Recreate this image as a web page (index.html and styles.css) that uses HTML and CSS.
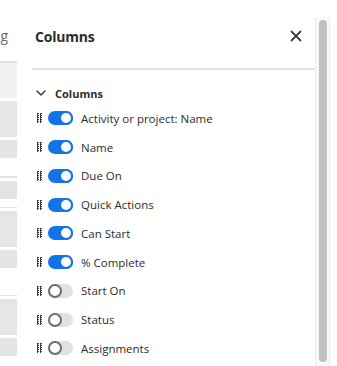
FILE: index.html
```html
<!DOCTYPE html>
<html lang="en">
<head>
	<meta charset="UTF-8">
	<meta name="viewport" content="width=device-width, initial-scale=1.0">
	<title>Columns</title>
	<link rel="stylesheet" href="styles.css">
</head>
<body>
	<div class="page">
		<div class="table-edge">
			<div class="edge-label">Sorting</div>
			<div class="edge-head"></div>
			<div class="edge-cell tall"></div>
			<div class="edge-cell short"></div>
			<div class="edge-line thick"></div>
			<div class="edge-cell short"></div>
			<div class="edge-line"></div>
			<div class="edge-cell tall"></div>
			<div class="edge-cell short"></div>
			<div class="edge-line spaced"></div>
			<div class="edge-cell tall"></div>
			<div class="edge-cell short"></div>
		</div>

		<div class="panel">
			<div class="panel-body">
				<div class="panel-header">
					<h2 class="panel-title">Columns</h2>
					<a href="#" class="btn-close" aria-label="Close">
						<svg width="12" height="12" viewBox="0 0 12 12"><path d="M1.5 1.5 L10.5 10.5 M10.5 1.5 L1.5 10.5" stroke="#3a3a3a" stroke-width="1.8" stroke-linecap="round"/></svg>
					</a>
				</div>
				<div class="divider"></div>

				<div class="section-head">
					<svg class="chevron" width="10" height="6" viewBox="0 0 10 6"><path d="M1 1 L5 5 L9 1" fill="none" stroke="#3a3a3a" stroke-width="1.5" stroke-linecap="round" stroke-linejoin="round"/></svg>
					<span>Columns</span>
				</div>

				<ul class="list-col" id="columns">
					<li class="item-col on"><i class="grip"></i><span class="switch"></span><span class="col-name">Activity or project: Name</span></li>
					<li class="item-col on"><i class="grip"></i><span class="switch"></span><span class="col-name">Name</span></li>
					<li class="item-col on"><i class="grip"></i><span class="switch"></span><span class="col-name">Due On</span></li>
					<li class="item-col on"><i class="grip"></i><span class="switch"></span><span class="col-name">Quick Actions</span></li>
					<li class="item-col on"><i class="grip"></i><span class="switch"></span><span class="col-name">Can Start</span></li>
					<li class="item-col on"><i class="grip"></i><span class="switch"></span><span class="col-name">% Complete</span></li>
					<li class="item-col"><i class="grip"></i><span class="switch"></span><span class="col-name">Start On</span></li>
					<li class="item-col"><i class="grip"></i><span class="switch"></span><span class="col-name">Status</span></li>
					<li class="item-col"><i class="grip"></i><span class="switch"></span><span class="col-name">Assignments</span></li>
				</ul>
			</div>
			<div class="scroll-track"><div class="scroll-thumb"></div></div>
		</div>
	</div>

	<script>
		// toggle a column on click
		document.querySelectorAll('#columns>li').forEach((item)=>{
			item.onclick=()=>{ item.classList.toggle('on'); }
		});
	</script>
</body>
</html>
```

FILE: styles.css
```css
html, body{margin: 0; padding: 0; background: #fff;}
body{font-family: "Open Sans", "Noto Sans", sans-serif; color: #2c2c2c;}
.page{display: flex; width: 337px; height: 366px; overflow: hidden;}

/* table behind the panel */
.table-edge{width: 17px; flex: none; overflow: hidden;}
.edge-label{
	margin-top: 27px; height: 18px; line-height: 18px; font-size: 14px; color: #6e6e6e;
	white-space: nowrap; display: flex; justify-content: flex-end; padding-right: 9px;
}
.edge-head{margin-top: 16px; height: 35px; background: #f1f1f1; border-top: 2px solid #e3e3e3;}
.edge-cell{background: #e6e6e7; margin-top: 3px;}
.edge-cell.tall{height: 36px;}
.edge-cell.short{height: 18px; background: #e4e4e4;}
.edge-line{height: 1px; background: #e4e4e4; margin-top: 8px;}
.edge-line.thick{height: 2px; margin-top: 18px; background: #e2e2e2;}
.edge-line.spaced{margin-top: 27px;}

/* panel */
.panel{flex: 1; display: flex; background: #fff;}
.panel-body{width: 298px; flex: none; padding-left: 15px; box-sizing: border-box;}
.panel-header{
	display: flex; align-items: center; justify-content: space-between;
	height: 32px; margin-top: 20px; margin-bottom: 16px; padding: 0 13px 0 3px;
}
.panel-title{margin: 0; font-size: 14px; font-weight: 700; letter-spacing: -0.2px;}
.btn-close{display: flex; width: 12px; height: 12px;}
.divider{height: 2px; background: #e1e1e1;}

.section-head{
	display: flex; align-items: center; height: 20px; margin-top: 13px;
	padding-left: 4px; font-size: 11px; font-weight: 700;
}
.chevron{margin-right: 9px;}

.list-col{list-style: none; margin: 1px 0 0; padding: 0 0 0 5px;}
.item-col{display: flex; align-items: center; height: 28.75px; font-size: 11.5px; cursor: default;}
.grip{
	width: 5px; height: 10px; margin-right: 6px; display: block; flex: none;
	background-image: radial-gradient(circle at 0.75px 0.75px, #3c3c3c 0.9px, transparent 1px);
	background-size: 3px 2px;
}
.switch{
	position: relative; width: 25px; height: 14px; border-radius: 7px;
	background: #e1e1e1; margin-right: 8px; flex: none;
}
.switch::after{
	content: ''; position: absolute; left: 0; top: 0; width: 10px; height: 10px;
	border-radius: 50%; background: #fff; border: 2px solid #6e6e6e;
}
.item-col.on .switch{background: #1473e6;}
.item-col.on .switch::after{left: 11px; border-color: #1473e6;}
.col-name{white-space: nowrap;}

/* scrollbar */
.scroll-track{
	width: 13px; flex: none; margin-top: 17px; height: 349px;
	background: #fafafa; border-left: 1px solid #ececec; border-right: 1px solid #ececec;
	display: flex; justify-content: center;
}
.scroll-thumb{width: 8px; height: 342px; margin-top: 3px; border-radius: 4px; background: #c1c1c1;}
```
